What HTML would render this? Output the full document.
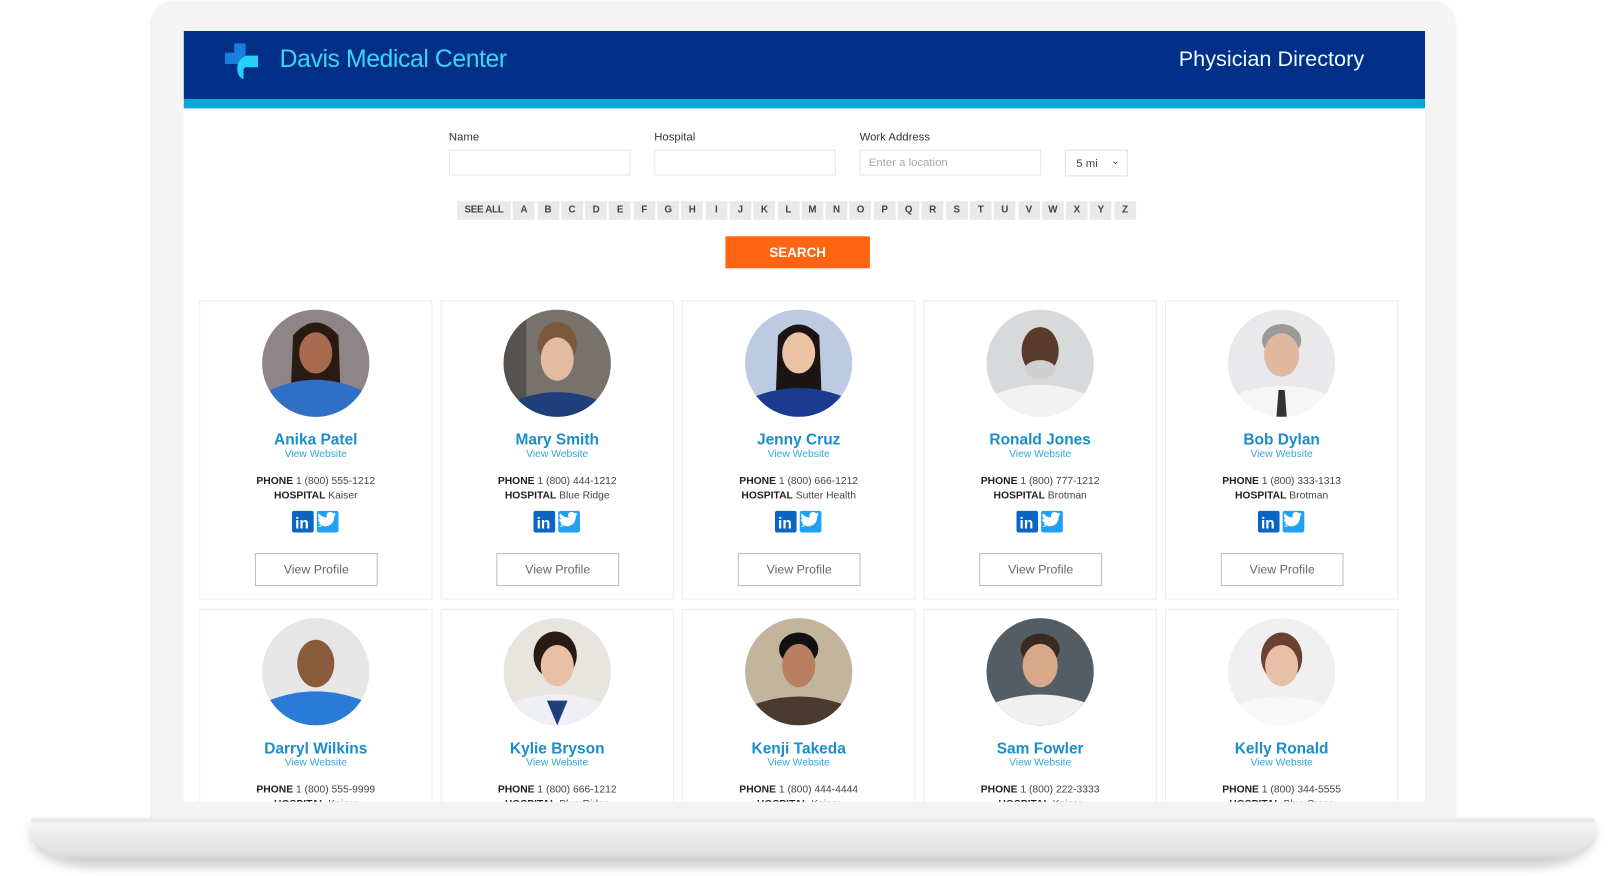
<!DOCTYPE html>
<html><head><meta charset="utf-8"><style>
*{margin:0;padding:0;box-sizing:border-box}
html,body{width:1617px;height:876px;overflow:hidden;background:#fff;font-family:"Liberation Sans",Arial,sans-serif}
#w{position:absolute;left:0;top:0;width:1567px;height:849px;transform:scale(1.0319);transform-origin:0 0}
.bez{position:absolute;left:147px;top:2px;width:1263px;height:800px;background:#f4f4f4;border-radius:22px 22px 0 0;box-shadow:0 0 3px rgba(0,0,0,.12)}
.scr{position:absolute;left:178px;top:30px;width:1203px;height:747px;background:#fff;overflow:hidden}
.hdr{position:absolute;left:0;top:0;width:1203px;height:66px;background:#022f88}
.strip{position:absolute;left:0;top:66px;width:1203px;height:9px;background:#00a9d6}
.t1{position:absolute;left:93px;top:14px;color:#3ad6f7;font-size:24px;letter-spacing:-.4px}
.t2{position:absolute;right:59px;top:16px;color:#eef8ff;font-size:21px}
.lbl{position:absolute;top:97px;font-size:11px;color:#333}
.inp{position:absolute;top:115px;width:176px;height:25px;border:1px solid #e6e6e6;font-size:11px;color:#aaa;padding:6px 8px}
.sel{position:absolute;left:854px;top:115px;width:61px;height:26px;border:1px solid #e0e0e0;font-size:11px;color:#444;padding:7px 10px}
.alpha{position:absolute;left:265px;top:165px;display:flex;gap:2.3px}
.alpha span{display:block;height:18px;width:21px;background:#e9e9e9;font-size:9.5px;color:#444;text-align:center;line-height:18px;font-weight:bold}
.alpha span.sa{width:52px;letter-spacing:-.3px}
.btn{position:absolute;left:525px;top:199px;width:140px;height:31px;background:#ff6410;color:#fff;font-weight:bold;font-size:13px;text-align:center;line-height:31px}
.card{position:absolute;width:226px;height:290px;border:1px solid #ececec;text-align:center}
.card svg.ph{position:absolute;left:60px;top:8px}
.nm{position:absolute;left:0;right:0;top:126px;font-size:15px;font-weight:bold;color:#1a8ecb}
.vw{position:absolute;left:0;right:0;top:143px;font-size:10px;color:#35a6d9}
.inf{position:absolute;left:0;right:0;top:168px;font-size:10px;color:#444;line-height:14px}
.inf b{color:#222}
.soc{position:absolute;left:89px;top:203px}
.vp{position:absolute;left:53px;top:244px;width:119px;height:32px;border:1px solid #bbb;font-size:12px;color:#666;line-height:30px}
.base{position:absolute;left:30px;top:793px;width:1515px;height:42px;border-radius:0 0 60px 60px/0 0 30px 30px;background:linear-gradient(#fafafa 0,#eee 30%,#e2e2e2 75%,#cfcfcf 100%);box-shadow:0 6px 10px rgba(0,0,0,.18)}
.base:before{content:"";position:absolute;left:0;top:0;width:100%;height:4px;background:#e8e8e8}
</style></head><body><div id="w">
<div class="bez"></div>
<div class="base"></div>
<div class="scr">
<div class="hdr">
<svg style="position:absolute;left:40px;top:12px" width="32" height="35" viewBox="0 0 32 35"><path d="M9 0h11v9H9zM0 9h20v11H0z" fill="#1a7ee0"/><path d="M21 12h11v11H21a3 3 0 0 0-3 3v9a10 10 0 0 1-6-10 12 12 0 0 1 9-13z" fill="#26d0f8"/><path d="M21 12h11v11h-11z" fill="#26d0f8"/></svg>
<div class="t1">Davis Medical Center</div>
<div class="t2">Physician Directory</div>
</div>
<div class="strip"></div>
<div class="lbl" style="left:257px">Name</div><div class="inp" style="left:257px"></div>
<div class="lbl" style="left:456px">Hospital</div><div class="inp" style="left:456px"></div>
<div class="lbl" style="left:655px">Work Address</div><div class="inp" style="left:655px">Enter a location</div>
<div class="sel">5 mi <span style="position:absolute;right:7px;top:5px;font-size:10px">&#8964;</span></div>
<div class="alpha"><span class="sa">SEE ALL</span><span>A</span><span>B</span><span>C</span><span>D</span><span>E</span><span>F</span><span>G</span><span>H</span><span>I</span><span>J</span><span>K</span><span>L</span><span>M</span><span>N</span><span>O</span><span>P</span><span>Q</span><span>R</span><span>S</span><span>T</span><span>U</span><span>V</span><span>W</span><span>X</span><span>Y</span><span>Z</span></div>
<div class="btn">SEARCH</div>

<div class="card" style="left:15px;top:261px"><svg class="ph" width="104" height="104" viewBox="0 0 104 104"><clipPath id="c1"><circle cx="52" cy="52" r="52"/></clipPath><g clip-path="url(#c1)"><rect width="104" height="104" fill="#8d8587"/><path d="M28 75 30 25Q52 0 74 25L76 80z" fill="#2a1a14"/><path d="M0 104 8 78Q52 58 96 78L104 104z" fill="#2f70c6"/><ellipse cx="52" cy="42" rx="16" ry="20" fill="#a86a4c"/></g></svg><div class="nm">Anika Patel</div><div class="vw">View Website</div><div class="inf"><b>PHONE</b> 1 (800) 555-1212<br><b>HOSPITAL</b> Kaiser</div><div class="soc"><svg width="46" height="21"><rect width="21" height="21" rx="2" fill="#0a66c2"/><text x="3" y="17" font-size="15" font-weight="bold" fill="#fff" font-family="Liberation Sans">in</text><rect x="24" width="21" height="21" rx="2" fill="#1da1f2"/><path d="M28 14q6 3 11-2 2-3 2-7l2-2-2 .5 1-2-2 1q-3-3-6 0-1 2 0 4-5 0-8-4-2 3 1 6l-2-.5q0 3 3 4h-2q1 2 4 2-2 2-5 1z" fill="#fff"/></svg></div><div class="vp">View Profile</div></div>

<div class="card" style="left:249px;top:261px"><svg class="ph" width="104" height="104" viewBox="0 0 104 104"><clipPath id="c2"><circle cx="52" cy="52" r="52"/></clipPath><g clip-path="url(#c2)"><rect width="104" height="104" fill="#77726c"/><rect x="0" width="22" height="104" fill="#55524f"/><ellipse cx="52" cy="34" rx="19" ry="22" fill="#7a5a3a"/><path d="M0 104 12 88Q52 72 92 88L104 104z" fill="#1f3f7a"/><ellipse cx="52" cy="48" rx="16" ry="21" fill="#e2bba2"/></g></svg><div class="nm">Mary Smith</div><div class="vw">View Website</div><div class="inf"><b>PHONE</b> 1 (800) 444-1212<br><b>HOSPITAL</b> Blue Ridge</div><div class="soc"><svg width="46" height="21"><rect width="21" height="21" rx="2" fill="#0a66c2"/><text x="3" y="17" font-size="15" font-weight="bold" fill="#fff" font-family="Liberation Sans">in</text><rect x="24" width="21" height="21" rx="2" fill="#1da1f2"/><path d="M28 14q6 3 11-2 2-3 2-7l2-2-2 .5 1-2-2 1q-3-3-6 0-1 2 0 4-5 0-8-4-2 3 1 6l-2-.5q0 3 3 4h-2q1 2 4 2-2 2-5 1z" fill="#fff"/></svg></div><div class="vp">View Profile</div></div>

<div class="card" style="left:483px;top:261px"><svg class="ph" width="104" height="104" viewBox="0 0 104 104"><clipPath id="c3"><circle cx="52" cy="52" r="52"/></clipPath><g clip-path="url(#c3)"><rect width="104" height="104" fill="#bccbe2"/><path d="M30 78 32 25Q52 4 72 25L74 78z" fill="#1a1412"/><path d="M0 104 10 84Q52 68 94 84L104 104z" fill="#1b3c8e"/><ellipse cx="52" cy="42" rx="16" ry="20" fill="#eac3a3"/></g></svg><div class="nm">Jenny Cruz</div><div class="vw">View Website</div><div class="inf"><b>PHONE</b> 1 (800) 666-1212<br><b>HOSPITAL</b> Sutter Health</div><div class="soc"><svg width="46" height="21"><rect width="21" height="21" rx="2" fill="#0a66c2"/><text x="3" y="17" font-size="15" font-weight="bold" fill="#fff" font-family="Liberation Sans">in</text><rect x="24" width="21" height="21" rx="2" fill="#1da1f2"/><path d="M28 14q6 3 11-2 2-3 2-7l2-2-2 .5 1-2-2 1q-3-3-6 0-1 2 0 4-5 0-8-4-2 3 1 6l-2-.5q0 3 3 4h-2q1 2 4 2-2 2-5 1z" fill="#fff"/></svg></div><div class="vp">View Profile</div></div>

<div class="card" style="left:717px;top:261px"><svg class="ph" width="104" height="104" viewBox="0 0 104 104"><clipPath id="c4"><circle cx="52" cy="52" r="52"/></clipPath><g clip-path="url(#c4)"><rect width="104" height="104" fill="#d6dadb"/><path d="M0 104 8 82Q52 64 96 82L104 104z" fill="#f2f2f2"/><ellipse cx="52" cy="40" rx="18" ry="23" fill="#5a3a28"/><ellipse cx="52" cy="58" rx="15" ry="9" fill="#cfcfcf"/></g></svg><div class="nm">Ronald Jones</div><div class="vw">View Website</div><div class="inf"><b>PHONE</b> 1 (800) 777-1212<br><b>HOSPITAL</b> Brotman</div><div class="soc"><svg width="46" height="21"><rect width="21" height="21" rx="2" fill="#0a66c2"/><text x="3" y="17" font-size="15" font-weight="bold" fill="#fff" font-family="Liberation Sans">in</text><rect x="24" width="21" height="21" rx="2" fill="#1da1f2"/><path d="M28 14q6 3 11-2 2-3 2-7l2-2-2 .5 1-2-2 1q-3-3-6 0-1 2 0 4-5 0-8-4-2 3 1 6l-2-.5q0 3 3 4h-2q1 2 4 2-2 2-5 1z" fill="#fff"/></svg></div><div class="vp">View Profile</div></div>

<div class="card" style="left:951px;top:261px"><svg class="ph" width="104" height="104" viewBox="0 0 104 104"><clipPath id="c5"><circle cx="52" cy="52" r="52"/></clipPath><g clip-path="url(#c5)"><rect width="104" height="104" fill="#e9e9eb"/><ellipse cx="52" cy="30" rx="19" ry="16" fill="#9a9a9a"/><path d="M0 104 8 82Q52 66 96 82L104 104z" fill="#f6f6f6"/><path d="M49 78h6l2 26h-10z" fill="#333"/><ellipse cx="52" cy="44" rx="17" ry="21" fill="#e0b8a0"/></g></svg><div class="nm">Bob Dylan</div><div class="vw">View Website</div><div class="inf"><b>PHONE</b> 1 (800) 333-1313<br><b>HOSPITAL</b> Brotman</div><div class="soc"><svg width="46" height="21"><rect width="21" height="21" rx="2" fill="#0a66c2"/><text x="3" y="17" font-size="15" font-weight="bold" fill="#fff" font-family="Liberation Sans">in</text><rect x="24" width="21" height="21" rx="2" fill="#1da1f2"/><path d="M28 14q6 3 11-2 2-3 2-7l2-2-2 .5 1-2-2 1q-3-3-6 0-1 2 0 4-5 0-8-4-2 3 1 6l-2-.5q0 3 3 4h-2q1 2 4 2-2 2-5 1z" fill="#fff"/></svg></div><div class="vp">View Profile</div></div>

<div class="card" style="left:15px;top:560px"><svg class="ph" width="104" height="104" viewBox="0 0 104 104"><clipPath id="d1"><circle cx="52" cy="52" r="52"/></clipPath><g clip-path="url(#d1)"><rect width="104" height="104" fill="#e6e6e6"/><path d="M0 104 6 80Q52 62 98 80L104 104z" fill="#2a7ad8"/><ellipse cx="52" cy="44" rx="18" ry="23" fill="#8a5a3a"/></g></svg><div class="nm">Darryl Wilkins</div><div class="vw">View Website</div><div class="inf"><b>PHONE</b> 1 (800) 555-9999<br><b>HOSPITAL</b> Kaiser</div></div>

<div class="card" style="left:249px;top:560px"><svg class="ph" width="104" height="104" viewBox="0 0 104 104"><clipPath id="d2"><circle cx="52" cy="52" r="52"/></clipPath><g clip-path="url(#d2)"><rect width="104" height="104" fill="#e8e4e0"/><ellipse cx="50" cy="36" rx="21" ry="23" fill="#2a1a14"/><path d="M0 104 8 82Q52 66 96 82L104 104z" fill="#eef0f5"/><path d="M42 80l10 24 10-24z" fill="#1f3f7a"/><ellipse cx="52" cy="46" rx="16" ry="20" fill="#e8c0a8"/></g></svg><div class="nm">Kylie Bryson</div><div class="vw">View Website</div><div class="inf"><b>PHONE</b> 1 (800) 666-1212<br><b>HOSPITAL</b> Blue Ridge</div></div>

<div class="card" style="left:483px;top:560px"><svg class="ph" width="104" height="104" viewBox="0 0 104 104"><clipPath id="d3"><circle cx="52" cy="52" r="52"/></clipPath><g clip-path="url(#d3)"><rect width="104" height="104" fill="#c4b49c"/><ellipse cx="52" cy="30" rx="19" ry="16" fill="#111"/><path d="M0 104 8 84Q52 68 96 84L104 104z" fill="#4a3a30"/><ellipse cx="52" cy="46" rx="16" ry="21" fill="#b88060"/></g></svg><div class="nm">Kenji Takeda</div><div class="vw">View Website</div><div class="inf"><b>PHONE</b> 1 (800) 444-4444<br><b>HOSPITAL</b> Kaiser</div></div>

<div class="card" style="left:717px;top:560px"><svg class="ph" width="104" height="104" viewBox="0 0 104 104"><clipPath id="d4"><circle cx="52" cy="52" r="52"/></clipPath><g clip-path="url(#d4)"><rect width="104" height="104" fill="#545d63"/><ellipse cx="52" cy="30" rx="19" ry="15" fill="#3a2a20"/><path d="M0 104 8 82Q52 66 96 82L104 104z" fill="#f0f0f0"/><ellipse cx="52" cy="46" rx="17" ry="21" fill="#d8a888"/></g></svg><div class="nm">Sam Fowler</div><div class="vw">View Website</div><div class="inf"><b>PHONE</b> 1 (800) 222-3333<br><b>HOSPITAL</b> Kaiser</div></div>

<div class="card" style="left:951px;top:560px"><svg class="ph" width="104" height="104" viewBox="0 0 104 104"><clipPath id="d5"><circle cx="52" cy="52" r="52"/></clipPath><g clip-path="url(#d5)"><rect width="104" height="104" fill="#f0f0f0"/><ellipse cx="52" cy="38" rx="20" ry="24" fill="#6a4030"/><path d="M0 104 10 84Q52 68 94 84L104 104z" fill="#f8f8f8"/><ellipse cx="52" cy="46" rx="16" ry="20" fill="#e8c0a8"/></g></svg><div class="nm">Kelly Ronald</div><div class="vw">View Website</div><div class="inf"><b>PHONE</b> 1 (800) 344-5555<br><b>HOSPITAL</b> Blue Cross</div></div>
</div>
</div></body></html>
